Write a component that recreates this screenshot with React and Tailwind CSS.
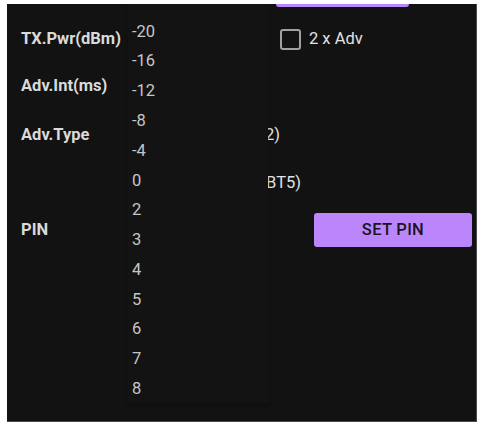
import React from "react";

const powers = ["-20", "-16", "-12", "-8", "-4", "0", "2", "3", "4", "5", "6", "7", "8"];

const App = () => {
  return (
    <div
      className="w-[485px] h-[436px] bg-white pl-[7px] pt-[4px]"
      style={{ fontFamily: "Roboto, 'Liberation Sans', sans-serif" }}
    >
      <div className="relative w-[470px] h-[418px] bg-[#121212] border-r border-b border-[#4a4a4a] flex flex-col">
        {/* bottom edge of the button above */}
        <div className="h-[3px] pl-[269px]">
          <div className="w-[133px] h-[3px] rounded-b-[3px] bg-[#bb86fc]" />
        </div>

        {/* TX power */}
        <div className="mt-[21px] h-[22px] flex items-center pl-[14px]">
          <span className="w-[107px] shrink-0 text-[16.5px] leading-[20px] font-bold text-[#dadada]">
            TX.Pwr(dBm)
          </span>
          <div className="w-[152px] shrink-0" />
          <div className="flex items-center gap-[8px]">
            <span className="w-[21px] h-[21px] rounded-[3px] border-2 border-[#a0a0a0]" />
            <span className="text-[16.5px] leading-[20px] text-[#e2e2e2]">2 x Adv</span>
          </div>
        </div>

        {/* Adv interval */}
        <div className="mt-[25px] h-[22px] flex items-center pl-[14px]">
          <span className="w-[107px] shrink-0 text-[16.5px] leading-[20px] font-bold text-[#dadada]">
            Adv.Int(ms)
          </span>
        </div>

        {/* Adv type */}
        <div className="mt-[27px] h-[22px] flex items-center pl-[14px]">
          <span className="w-[107px] shrink-0 text-[16.5px] leading-[20px] font-bold text-[#dadada]">
            Adv.Type
          </span>
          <span className="w-[152px] shrink-0 text-right text-[16.5px] leading-[20px] text-[#e2e2e2]">
            Legacy (BT4.2)
          </span>
        </div>

        <div className="mt-[26px] h-[22px] flex items-center pl-[14px]">
          <span className="w-[107px] shrink-0" />
          <span className="w-[173px] shrink-0 text-right text-[16.5px] leading-[20px] text-[#e2e2e2]">
            Extended (BT5)
          </span>
        </div>

        {/* PIN */}
        <div className="mt-[19px] h-[34px] flex items-center justify-between pl-[14px] pr-[4px]">
          <span className="text-[16.5px] leading-[20px] font-bold text-[#dadada]">PIN</span>
          <button className="w-[158px] h-[34px] rounded-[3px] bg-[#bb86fc] text-[#1c1224] text-[16.5px] font-medium tracking-[0.3px]">
            SET PIN
          </button>
        </div>

        {/* open power dropdown */}
        <div className="absolute left-[121px] top-0 w-[140px] h-[399px] bg-[#131313] pt-[13px] shadow-[0_3px_4px_rgba(0,0,0,0.2)]">
          {powers.map((p) => (
            <div
              key={p}
              className="h-[29.8px] flex items-center pl-[4px] text-[16.5px] text-[#c6c6c6]"
            >
              {p}
            </div>
          ))}
        </div>
      </div>
    </div>
  );
};

export default App;
